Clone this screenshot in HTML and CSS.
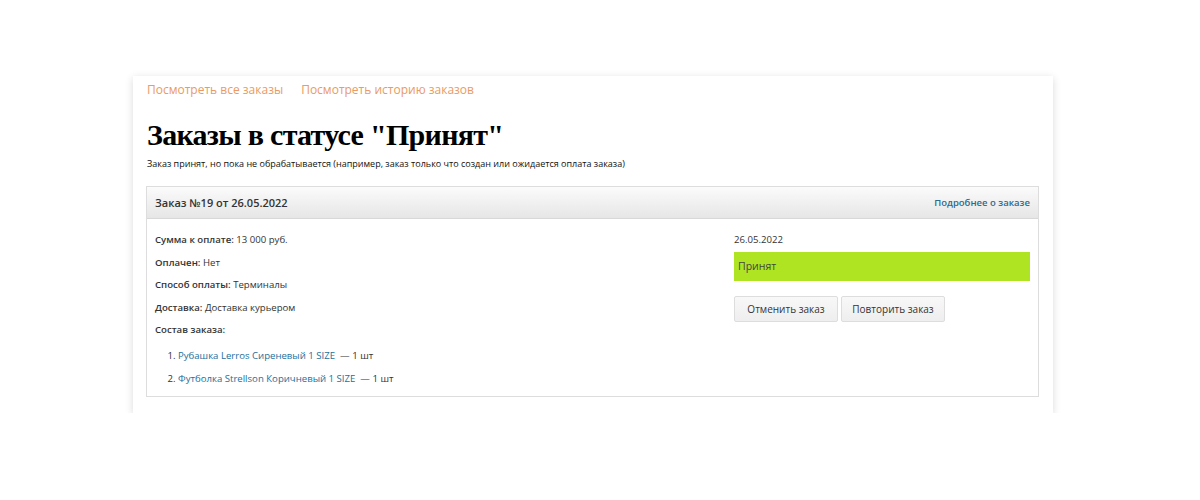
FILE: index.html
```html
<!DOCTYPE html>
<html lang="ru">
<head>
  <meta charset="UTF-8">
  <title>Заказы</title>
  <link rel="stylesheet" href="styles.css">
</head>
<body>

  <div class="card">
    <div class="top-links">
      <a href="#">Посмотреть все заказы</a>
      <a href="#">Посмотреть историю заказов</a>
    </div>

    <h1>Заказы в статусе "Принят"</h1>
    <p class="status-note">Заказ принят, но пока не обрабатывается (например, заказ только что создан или ожидается оплата заказа)</p>

    <div class="order">
      <div class="order-head">
        <span class="order-title">Заказ №19 от 26.05.2022</span>
        <a href="#" class="order-more">Подробнее о заказе</a>
      </div>

      <div class="order-body">
        <div class="order-info">
          <div class="row"><b>Сумма к оплате:</b> 13 000 руб.</div>
          <div class="row"><b>Оплачен:</b> Нет</div>
          <div class="row"><b>Способ оплаты:</b> Терминалы</div>
          <div class="row"><b>Доставка:</b> Доставка курьером</div>
          <div class="row"><b>Состав заказа:</b></div>
          <ol class="items">
            <li><a href="#">Рубашка Lerros Сиреневый 1 SIZE</a> &nbsp;— 1 шт</li>
            <li><a href="#">Футболка Strellson Коричневый 1 SIZE</a> &nbsp;— 1 шт</li>
          </ol>
        </div>

        <div class="order-side">
          <div class="date">26.05.2022</div>
          <div class="status">Принят</div>
          <div class="actions">
            <button>Отменить заказ</button>
            <button>Повторить заказ</button>
          </div>
        </div>
      </div>
    </div>
  </div>

</body>
</html>
```

FILE: styles.css
```css
body {
  margin: 0;
  background: #fff;
  font-family: "Open Sans", sans-serif;
}

.card {
  width: 920px;
  margin: 76px 0 0 133px;
  padding: 0 14px 16px 13px;
  box-sizing: border-box;
  background: #fff;
  box-shadow: 0 2px 8px rgba(0, 0, 0, 0.15);
}

.top-links {
  padding: 5px 0 0 1px;
  display: flex;
  gap: 18px;
}

.top-links a {
  color: #ea9a62;
  font-size: 12px;
  text-decoration: none;
}

h1 {
  font-family: "Liberation Serif", serif;
  font-size: 30px;
  letter-spacing: -0.7px;
  font-weight: bold;
  margin: 19px 0 0 1px;
  line-height: 36px;
  color: #000;
}

.status-note {
  font-size: 9px;
  margin: 4px 0 16px 1px;
  color: #111;
}

.order {
  border: 1px solid #ddd;
}

.order-head {
  height: 31px;
  padding: 0 8px;
  display: flex;
  align-items: center;
  justify-content: space-between;
  background: linear-gradient(to bottom, #fbfbfb, #e6e6e6);
  border-bottom: 1px solid #d8d8d8;
}

.order-title {
  font-size: 11px;
  font-weight: 600;
  color: #333;
}

.order-more {
  font-size: 9.5px;
  font-weight: 600;
  color: #2e6a8e;
  text-decoration: none;
}

.order-body {
  display: flex;
  padding: 14px 8px 1px;
  font-size: 9.6px;
  color: #333;
}

.order-info {
  flex: 1;
}

.row {
  height: 22.5px;
}

.row b {
  font-weight: 600;
}

.items {
  margin: 3px 0 0;
  padding-left: 23px;
}

.items li {
  height: 23px;
}

.items a {
  color: #1d6f9c;
  text-decoration: none;
}

.order-side {
  width: 296px;
}

.date {
  height: 19px;
}

.status {
  height: 29px;
  line-height: 29px;
  padding-left: 4px;
  background: #aee421;
  color: #444;
  font-size: 10.5px;
}

.actions {
  display: flex;
  gap: 3px;
  margin-top: 15px;
}

.actions button {
  width: 104px;
  height: 26px;
  padding: 0;
  font-family: "Open Sans", sans-serif;
  font-size: 10px;
  color: #333;
  background: linear-gradient(to bottom, #f8f8f8, #eeeeee);
  border: 1px solid #ddd;
  border-radius: 2px;
}
```
